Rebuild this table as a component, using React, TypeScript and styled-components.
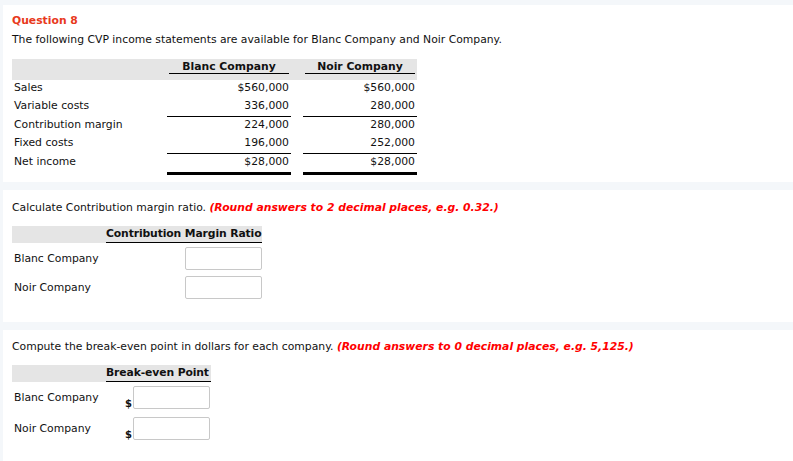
import styled, { createGlobalStyle } from "styled-components";

const GlobalStyle = createGlobalStyle`
  html, body {
    margin: 0;
    padding: 0;
    background: #f4f7fa;
  }
  body {
    font-family: "DejaVu Sans", Verdana, sans-serif;
    font-size: 10.8px;
    color: #111;
  }
`;

type Line = "none" | "single" | "double";

interface StatementRow {
  label: string;
  blanc: string;
  noir: string;
  line: Line;
}

const statement: StatementRow[] = [
  { label: "Sales", blanc: "$560,000", noir: "$560,000", line: "none" },
  { label: "Variable costs", blanc: "336,000", noir: "280,000", line: "single" },
  { label: "Contribution margin", blanc: "224,000", noir: "280,000", line: "none" },
  { label: "Fixed costs", blanc: "196,000", noir: "252,000", line: "single" },
  { label: "Net income", blanc: "$28,000", noir: "$28,000", line: "double" },
];

const companies = ["Blanc Company", "Noir Company"];

const App = () => {
  return (
    <>
      <GlobalStyle />
      <Page>
        <Panel $height={177}>
          <QuestionTitle>Question 8</QuestionTitle>
          <Prompt $pad={5}>
            The following CVP income statements are available for Blanc Company and Noir Company.
          </Prompt>
          <Statement>
            <HeadBand>
              <span />
              <ColHead>Blanc Company</ColHead>
              <span />
              <ColHead>Noir Company</ColHead>
            </HeadBand>
            {statement.map((row) => (
              <StmtRow key={row.label}>
                <StmtLabel>{row.label}</StmtLabel>
                <Amount $line={row.line}>{row.blanc}</Amount>
                <span />
                <Amount $line={row.line}>{row.noir}</Amount>
              </StmtRow>
            ))}
          </Statement>
        </Panel>

        <Panel $height={132}>
          <Prompt $pad={11}>
            Calculate Contribution margin ratio.{" "}
            <Hint>(Round answers to 2 decimal places, e.g. 0.32.)</Hint>
          </Prompt>
          <AnswerTable $width={250}>
            <AnswerHead>
              <AnswerHeadText>Contribution Margin Ratio</AnswerHeadText>
            </AnswerHead>
            {companies.map((c, i) => (
              <AnswerRow key={c} $gap={i === 0 ? 4 : 6}>
                <AnswerLabel $width={171}>{c}</AnswerLabel>
                <AnswerInput type="text" />
              </AnswerRow>
            ))}
          </AnswerTable>
        </Panel>

        <Panel $height={140}>
          <Prompt $pad={10}>
            Compute the break-even point in dollars for each company.{" "}
            <Hint>(Round answers to 0 decimal places, e.g. 5,125.)</Hint>
          </Prompt>
          <AnswerTable $width={199}>
            <AnswerHead>
              <AnswerHeadText>Break-even Point</AnswerHeadText>
            </AnswerHead>
            {companies.map((c, i) => (
              <AnswerRow key={c} $gap={i === 0 ? 4 : 8}>
                <AnswerLabel $width={110}>{c}</AnswerLabel>
                <Dollar>$</Dollar>
                <AnswerInput type="text" />
              </AnswerRow>
            ))}
          </AnswerTable>
        </Panel>
      </Page>
    </>
  );
};

const Page = styled.div`
  padding: 5px 0 0 3px;
  display: flex;
  flex-direction: column;
  gap: 8px;
`;

const Panel = styled.section<{ $height: number }>`
  background: #ffffff;
  min-height: ${(p) => p.$height}px;
  padding: 0 9px;
  box-sizing: border-box;
`;

const QuestionTitle = styled.div`
  color: #e8391c;
  font-weight: bold;
  padding-top: 9px;
  line-height: 14px;
`;

const Prompt = styled.div<{ $pad: number }>`
  padding-top: ${(p) => p.$pad}px;
  line-height: 14px;
`;

const Hint = styled.span`
  color: #ff0000;
  font-weight: bold;
  font-style: italic;
`;

const Statement = styled.div`
  margin-top: 12px;
  width: 405px;
`;

const HeadBand = styled.div`
  display: grid;
  grid-template-columns: 155px 124px 12px 114px;
  height: 21px;
  background: #e5e5e5;
`;

const ColHead = styled.div`
  font-weight: bold;
  text-align: center;
  align-self: start;
  margin: 2px 2px 0;
  line-height: 12px;
  border-bottom: 1px solid #000;
`;

const StmtRow = styled.div`
  display: grid;
  grid-template-columns: 155px 124px 12px 114px;
  align-items: start;
`;

const StmtLabel = styled.div`
  padding: 1px 0 0 2px;
  line-height: 14px;
`;

const Amount = styled.div<{ $line: Line }>`
  text-align: right;
  padding: 1px 2px 0 0;
  line-height: 14px;
  height: 17px;
  border-bottom: ${(p) =>
    p.$line === "single"
      ? "1px solid #000"
      : p.$line === "double"
        ? "3px solid #000"
        : "0"};
  box-sizing: content-box;
`;

const AnswerTable = styled.div<{ $width: number }>`
  margin-top: 11px;
  width: ${(p) => p.$width}px;
`;

const AnswerHead = styled.div`
  background: #e5e5e5;
  height: 17px;
  padding-left: 94px;
`;

const AnswerHeadText = styled.div`
  font-weight: bold;
  line-height: 16px;
  letter-spacing: -0.12px;
  border-bottom: 1px solid #000;
  white-space: nowrap;
`;

const AnswerRow = styled.div<{ $gap: number }>`
  display: flex;
  align-items: flex-end;
  margin-top: ${(p) => p.$gap}px;
  padding-left: 2px;
`;

const AnswerLabel = styled.span<{ $width: number }>`
  align-self: center;
  flex-shrink: 0;
  width: ${(p) => p.$width}px;
`;

const Dollar = styled.span`
  width: 9px;
  text-align: center;
  font-size: 10px;
  font-weight: bold;
  line-height: 11px;
`;

const AnswerInput = styled.input`
  width: 77px;
  height: 23px;
  box-sizing: border-box;
  border: 1px solid #c8c8c8;
  border-radius: 2px;
  padding: 0 4px;
  margin: 0;
  font: inherit;
  background: #fff;
`;

export default App;
